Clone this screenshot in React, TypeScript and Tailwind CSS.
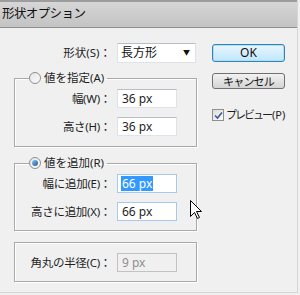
import React from 'react';

const font = { fontFamily: '"Noto Sans", "Noto Sans CJK JP", sans-serif' };

function Radio({ checked }: { checked?: boolean }) {
    return (
        <span className="w-[12px] h-[12px] rounded-full border border-[#8e8f8f] bg-gradient-to-br from-[#e6e6e6] to-[#fbfbfb] flex items-center justify-center">
            {checked && <span className="w-[6px] h-[6px] rounded-full bg-gradient-to-br from-[#8ac7f2] to-[#1c5b9c]" />}
        </span>
    );
}

function Field({ label, value, selected, focus, disabled }: { label: string; value: string; selected?: boolean; focus?: boolean; disabled?: boolean }) {
    return (
        <div className="flex items-center">
            <span className="w-[102px] pr-[6px] text-right text-[11.5px] text-[#1e1e1e] whitespace-nowrap tracking-[-0.3px]">{label}</span>
            <div className={`w-[60px] h-[19px] flex items-center pl-[3px] text-[12px] border ${disabled ? 'bg-[#f0f0f0] border-[#c2c2c2] text-[#8f8f8f]' : focus ? 'bg-white border-[#a8c9ec] text-[#1e1e1e]' : 'bg-white border-[#dde3ea] border-t-[#b9bec6] text-[#1e1e1e]'}`}>
                {selected ? <span className="bg-[#3399ff] text-white px-[1px] leading-[15px]">{value}</span> : <span className="px-[1px]">{value}</span>}
            </div>
        </div>
    );
}

export default function App() {
    return (
        <div className="w-[300px] h-[295px] bg-[#f0f0f0] relative overflow-hidden" style={font}>
            <div className="w-[298px] h-[293px] border-r border-b border-[#d6d6d6] flex flex-col">
                <div className="h-[28px] border-t-[2px] border-[#9d9d9d] border-b border-b-[#8f8f8f] bg-gradient-to-b from-[#d6d6d6] to-[#c3c3c3] flex items-center pl-[2px] text-[12.5px] tracking-[-0.6px] text-[#111]">
                    形状オプション
                </div>
                <div className="flex pl-[14px] pt-[15px]">
                    <div className="w-[183px] flex flex-col">
                        <div className="flex items-center">
                            <span className="w-[103px] pr-[6px] text-right text-[11.5px] text-[#1e1e1e]">形状(S)：</span>
                            <div className="w-[79px] h-[20px] flex border border-[#dde3ea] border-t-[#b9bec6] bg-white">
                                <span className="flex-1 pl-[3px] text-[12px] text-[#111] flex items-center">長方形</span>
                                <span className="w-[17px] flex items-center justify-center text-[7px] text-[#111]">▼</span>
                            </div>
                        </div>
                        <fieldset className="mt-[8px] border border-[#a9a9a9] shadow-[1px_1px_0_#fff,inset_1px_1px_0_#fff] pt-[4px] pb-[10px] flex flex-col gap-[9px]">
                            <legend className="ml-[14px] pr-[3px] h-[14px] flex items-center gap-[3px] text-[11.5px] text-[#1e1e1e]">
                                <Radio />
                                値を指定(A)
                            </legend>
                            <Field label="幅(W)：" value="36 px" />
                            <Field label="高さ(H)：" value="36 px" />
                        </fieldset>
                        <fieldset className="mt-[9px] border border-[#a9a9a9] shadow-[1px_1px_0_#fff,inset_1px_1px_0_#fff] pt-[4px] pb-[9px] flex flex-col gap-[9px]">
                            <legend className="ml-[14px] pr-[3px] h-[14px] flex items-center gap-[3px] text-[11.5px] text-[#1e1e1e]">
                                <Radio checked />
                                値を追加(R)
                            </legend>
                            <Field label="幅に追加(E)：" value="66 px" selected focus />
                            <Field label="高さに追加(X)：" value="66 px" focus />
                        </fieldset>
                        <fieldset className="mt-[11px] border border-[#a9a9a9] shadow-[1px_1px_0_#fff,inset_1px_1px_0_#fff] pt-[10px] pb-[9px]">
                            <Field label="角丸の半径(C)：" value="9 px" disabled />
                        </fieldset>
                    </div>
                    <div className="ml-[15px] w-[73px] flex flex-col">
                        <button className="mt-[1px] h-[18px] rounded-[3px] border border-[#3c7fb1] bg-gradient-to-b from-[#eaf6fd] to-[#bee6fd] shadow-[inset_0_0_0_1px_#a6e2f8] text-[12px] text-[#111] leading-none">OK</button>
                        <button className="mt-[11px] h-[16px] rounded-[3px] border border-[#707070] bg-gradient-to-b from-[#f2f2f2] to-[#d4d4d4] text-[11px] tracking-[-0.8px] text-[#111] leading-none">キャンセル</button>
                        <label className="mt-[18px] flex items-center gap-[2px] text-[11px] text-[#1e1e1e] whitespace-nowrap">
                            <span className="shrink-0 w-[12px] h-[12px] border border-[#8e8f8f] bg-gradient-to-br from-[#dcdcdc] to-[#fbfbfb] flex items-center justify-center">
                                <svg width="9" height="9" viewBox="0 0 9 9"><path d="M1 4.5 L3.5 7 L8 1.5" fill="none" stroke="#3c5a9a" strokeWidth="1.6" /></svg>
                            </span>
                            <span className="tracking-[-2px]">プレビュー</span>
                            <span className="-ml-[1px]">(P)</span>
                        </label>
                    </div>
                </div>
            </div>
            <svg className="absolute left-[190px] top-[200px]" width="13" height="20" viewBox="0 0 13 20">
                <path d="M0.5 0.5 L0.5 16.5 L4.5 12.5 L7.5 18.5 L9.5 17.5 L6.5 11.5 L11.5 11.5 Z" fill="#fff" stroke="#000" strokeWidth="1" strokeLinejoin="miter" />
            </svg>
        </div>
    );
}
